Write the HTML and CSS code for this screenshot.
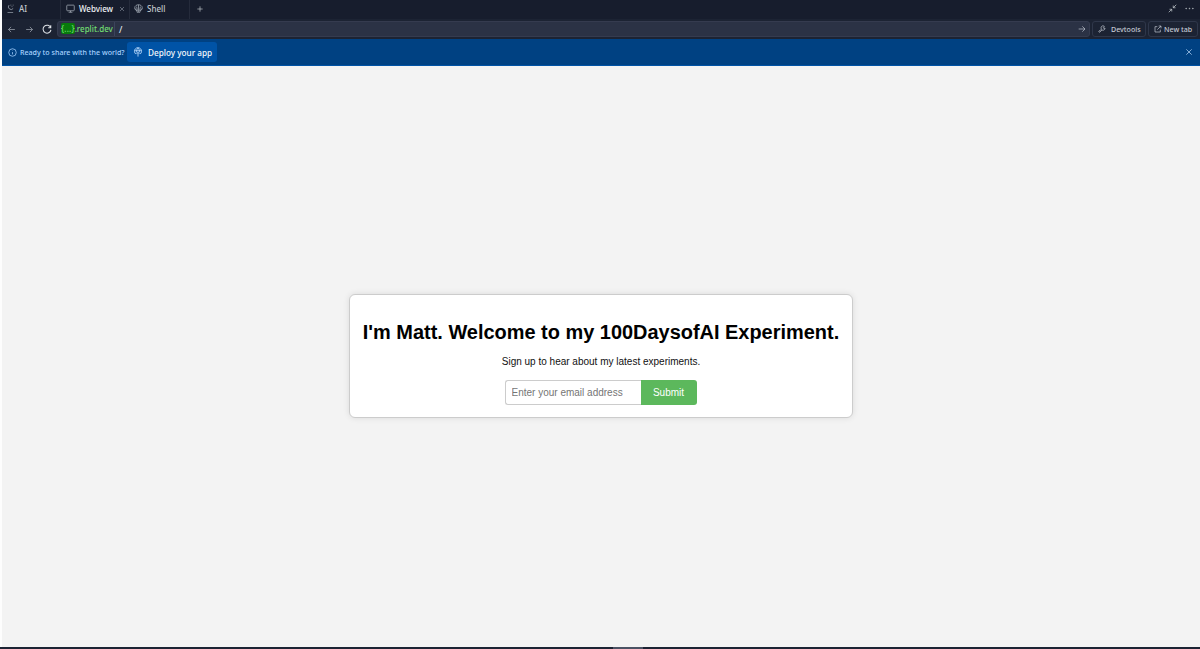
FILE: index.html
```html
<!DOCTYPE html>
<html lang="en">
<head>
  <meta charset="UTF-8" />
  <meta name="viewport" content="width=device-width, initial-scale=1.0"/>
  <title>Webview</title>
  <link rel="stylesheet" href="styles.css">
</head>
<body>
  <div class="window">
    <!-- Tabs -->
    <div class="tabs">
      <div class="tab tab-ai">
        <svg class="icon" viewBox="0 0 24 24"><path d="M8 3a7 7 0 1 0 11 9M4 23h15M12 3h2M18 3h2M15 7h2"/></svg>
        <span>AI</span>
      </div>
      <div class="tab tab-webview active">
        <svg class="icon" viewBox="0 0 24 24"><rect x="2" y="3" width="20" height="15" rx="2"/><path d="M7 22h10M12 18v4"/></svg>
        <span>Webview</span>
        <svg class="tab-close" viewBox="0 0 24 24"><path d="M4 4l16 16M20 4L4 20"/></svg>
      </div>
      <div class="tab tab-shell">
        <svg class="icon" viewBox="0 0 24 24"><path d="M8 18C4 17 2 14 2 10C2 5 7 2 12 2s10 3 10 8c0 4-2 7-6 8v4H8zM12 2v19M9 18L7 7M15 18l2-11M8 18l-5-6M16 18l5-6"/></svg>
        <span>Shell</span>
      </div>
      <svg class="tab-add" viewBox="0 0 24 24"><path d="M12 4v16M4 12h16"/></svg>
      <div class="window-actions">
        <svg class="icon" viewBox="0 0 24 24"><path d="M2 22l8-8M4 14h6v6M22 2l-8 8M14 4v6h6"/></svg>
        <svg class="icon dots" viewBox="0 0 24 24"><circle cx="3" cy="12" r="1"/><circle cx="12" cy="12" r="1"/><circle cx="21" cy="12" r="1"/></svg>
      </div>
    </div>

    <!-- Address bar -->
    <div class="toolbar">
      <svg class="nav-icon" viewBox="0 0 24 24"><path d="M21 12H4M11 5l-7 7 7 7"/></svg>
      <svg class="nav-icon" viewBox="0 0 24 24"><path d="M3 12h17M13 5l7 7-7 7"/></svg>
      <svg class="nav-icon reload" viewBox="0 0 24 24"><path d="M21 3v6h-6M21 9a9.500 9.500 0 1 0 .5 5"/></svg>
      <div class="address">
        <div class="host"><span class="host-id">{...}</span>.replit.dev</div>
        <span class="path">/</span>
        <svg class="go" viewBox="0 0 24 24"><path d="M2 12h19M13 4l8 8-8 8"/></svg>
      </div>
      <div class="tool-btn devtools">
        <svg class="tool-icon" viewBox="0 0 24 24"><path d="M11 13a6 6 0 0 1 8-9l-3 4 1 2 4-1a6 6 0 0 1-9 6l-6 6a2 2 0 0 1-3-3z"/></svg>
        <span>Devtools</span>
      </div>
      <div class="tool-btn newtab">
        <svg class="tool-icon" viewBox="0 0 24 24"><path d="M10 5H3v16h16v-7M14 3h7v7M21 3L10 14"/></svg>
        <span>New tab</span>
      </div>
    </div>

    <!-- Deploy banner -->
    <div class="banner">
      <svg class="info" viewBox="0 0 24 24"><circle cx="12" cy="12" r="10"/><path d="M12 11v6M12 7v1"/></svg>
      <span class="banner-text">Ready to share with the world?</span>
      <div class="deploy-btn">
        <svg class="deploy-icon" viewBox="0 0 24 24"><path d="M7 17a8.500 8.500 0 1 1 10 0M4 9h16M9 13C8 9 9 5 12 2c3 3 4 7 3 11M12 23V13M8.500 16.500L12 13l3.500 3.500"/></svg>
        <span>Deploy your app</span>
      </div>
      <svg class="banner-close" viewBox="0 0 24 24"><path d="M4 4l16 16M20 4L4 20"/></svg>
    </div>

    <!-- Page -->
    <main class="page">
      <div class="container">
        <h1>I'm Matt. Welcome to my 100DaysofAI Experiment.</h1>
        <p>Sign up to hear about my latest experiments.</p>
        <form class="signup">
          <input type="email" placeholder="Enter your email address">
          <button type="submit">Submit</button>
        </form>
      </div>
    </main>
    <div class="bottom-edge"><span class="handle"></span></div>
  </div>
</body>
</html>
```

FILE: styles.css
```css
* {
  box-sizing: border-box;
}

body {
  margin: 0;
  background: #fff;
  font-family: "Noto Sans", sans-serif;
  overflow: hidden;
}

.window {
  display: flex;
  flex-direction: column;
  height: 649px;
  border-left: 2px solid #fdfdfd;
}

svg {
  fill: none;
  stroke: currentColor;
  stroke-width: 2;
  flex-shrink: 0;
}

.tabs {
  display: flex;
  align-items: center;
  height: 19px;
  background: #171d2d;
  color: #c2c8cc;
  font-size: 8px;
}

.tab {
  display: flex;
  align-items: center;
  height: 19px;
  padding-left: 4px;
  padding-bottom: 2px;
  border-right: 1px solid #252b3b;
  white-space: nowrap;
}

.tab .icon {
  width: 9px;
  height: 9px;
  margin-right: 4px;
  color: #a5adb8;
}

.tab-ai {
  width: 59px;
  font-weight: 500;
}

.tab-webview {
  width: 69px;
  padding-left: 5px;
  color: #f0f3f6;
  font-weight: 500;
}

.tab .tab-close {
  width: 6px;
  height: 6px;
  margin-left: 6px;
  color: #a5adb8;
}

.tab-shell {
  width: 60px;
  font-weight: 500;
}

.tab-add {
  width: 8px;
  height: 8px;
  margin-left: 6px;
  margin-bottom: 2px;
}

.window-actions {
  display: flex;
  gap: 8px;
  margin-left: auto;
  margin-right: 6px;
  margin-bottom: 2px;
}

.window-actions .icon {
  width: 9px;
  height: 9px;
}

.dots {
  fill: currentColor;
}

.toolbar {
  display: flex;
  align-items: center;
  height: 20px;
  padding-left: 5px;
  background: #1c2333;
  color: #c5cad3;
  font-size: 7.1px;
}

.nav-icon {
  width: 9px;
  height: 9px;
  margin-right: 9px;
  color: #9ba3ae;
}

.reload {
  width: 10px;
  height: 10px;
  margin-left: -1px;
  margin-right: 5px;
  color: #e0e4e8;
  stroke-width: 2.5;
}

.address {
  display: flex;
  align-items: center;
  flex: 1;
  height: 16px;
  padding: 0 3px 0 1px;
  border: 1px solid #353b4f;
  border-radius: 3px;
  background: #2b3245;
}

.host {
  width: 56px;
  height: 14px;
  padding-left: 2px;
  border-right: 1px solid #3c445c;
  color: #72df72;
  font-size: 8px;
  font-weight: 500;
  line-height: 13px;
  white-space: nowrap;
}

.host-id {
  padding: 0;
  border-radius: 2px;
  background: #087b0c;
  letter-spacing: 0.2px;
}

.path {
  margin-left: 4px;
  color: #f5f9fc;
  font-size: 9px;
}

.go {
  width: 8px;
  height: 8px;
  margin-left: auto;
}

.tool-btn {
  display: flex;
  align-items: center;
  height: 16px;
  margin-left: 2px;
  padding-left: 5px;
  border: 1px solid #2f374a;
  border-radius: 3px;
  white-space: nowrap;
  font-weight: 500;
}

.tool-icon {
  width: 8px;
  height: 8px;
  margin-right: 4px;
}

.devtools {
  width: 54px;
}

.devtools .tool-icon {
  margin-right: 5px;
}

.newtab {
  width: 50px;
  margin-right: 2px;
}

.newtab .tool-icon {
  margin-right: 2px;
}

.banner {
  display: flex;
  align-items: center;
  height: 27px;
  padding-left: 6px;
  border-bottom: 1px solid #0053a6;
  background: #004182;
  color: #a8d3ff;
}

.info {
  width: 9px;
  height: 9px;
  margin-right: 3px;
}

.banner-text {
  width: 107px;
  font-size: 7.1px;
  font-weight: 500;
  white-space: nowrap;
}

.deploy-btn {
  display: flex;
  align-items: center;
  width: 90px;
  height: 20px;
  padding-left: 6px;
  border-radius: 3px;
  background: #0053a6;
  color: #f5f9fc;
  font-size: 8.2px;
  font-weight: 500;
  white-space: nowrap;
}

.deploy-icon {
  width: 10px;
  height: 10px;
  margin-right: 5px;
  color: #bfdfff;
}

.banner-close {
  width: 8px;
  height: 8px;
  margin-left: auto;
  margin-right: 7px;
  color: #c7e2ff;
}

.page {
  display: flex;
  flex: 1;
  justify-content: center;
  align-items: center;
  padding-bottom: 2px;
  background: #f3f3f3;
  font-family: "Liberation Sans", Arial, sans-serif;
}

.container {
  width: 504px;
  height: 124px;
  padding-top: 25px;
  border: 1px solid #ccc;
  border-radius: 6px;
  background: #fff;
  box-shadow: 0 0 6px rgba(0, 0, 0, 0.1);
  text-align: center;
}

h1 {
  margin: 0;
  color: #000;
  font-size: 19.95px;
  line-height: 24px;
  white-space: nowrap;
}

p {
  margin: 12px 0;
  color: #111;
  font-size: 10px;
  line-height: 12px;
}

.signup {
  display: flex;
  justify-content: center;
  margin-right: 1px;
}

.signup input {
  width: 136px;
  height: 25px;
  padding: 0 6px;
  border: 1px solid #ccc;
  border-right: none;
  border-radius: 3px 0 0 3px;
  font: 10px "Liberation Sans", Arial, sans-serif;
}

.signup input::placeholder {
  color: #757575;
}

.signup button {
  width: 56px;
  height: 25px;
  padding: 0;
  border: none;
  border-radius: 0 3px 3px 0;
  background: #5cb85c;
  color: #fff;
  font: 10px "Liberation Sans", Arial, sans-serif;
}

.bottom-edge {
  display: flex;
  justify-content: center;
  height: 2px;
  margin-left: -2px;
  background: #1c2333;
}

.handle {
  width: 30px;
  margin-left: 56px;
  background: #4b5263;
}
```
